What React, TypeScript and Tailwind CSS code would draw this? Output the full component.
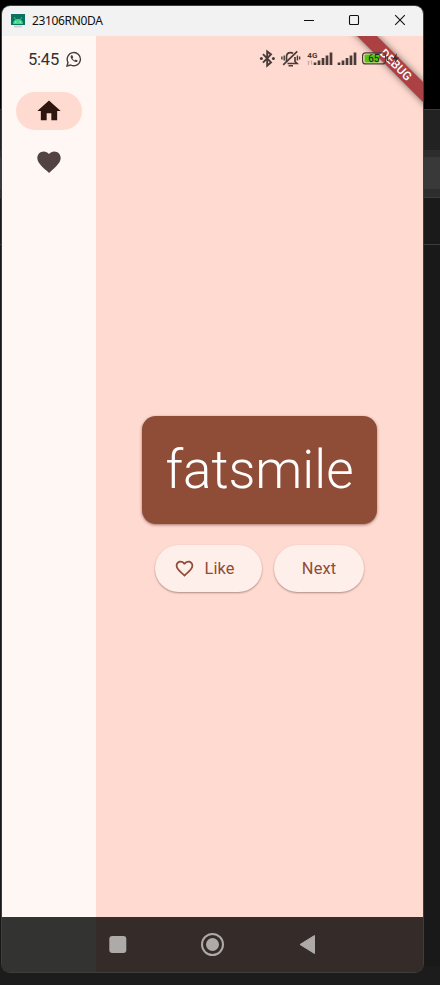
import React from "react";

const HEART =
  "M12 21.35l-1.45-1.32C5.4 15.36 2 12.28 2 8.5 2 5.42 4.42 3 7.5 3c1.74 0 3.41.81 4.5 2.09C13.09 3.81 14.76 3 16.5 3 19.58 3 22 5.42 22 8.5c0 3.78-3.4 6.86-8.55 11.54L12 21.35z";
const HEART_OUTLINE =
  "M16.5 3c-1.74 0-3.41.81-4.5 2.09C10.91 3.81 9.24 3 7.5 3 4.42 3 2 5.42 2 8.5c0 3.78 3.4 6.86 8.55 11.54L12 21.35l1.45-1.32C18.6 15.36 22 12.28 22 8.5 22 5.42 19.58 3 16.5 3zm-4.4 15.55l-.1.1-.1-.1C7.14 14.24 4 11.39 4 8.5 4 6.5 5.5 5 7.5 5c1.54 0 3.04.99 3.57 2.36h1.87C13.46 5.99 14.96 5 16.5 5c2 0 3.5 1.5 3.5 3.5 0 2.89-3.14 5.74-7.9 10.05z";

function Backdrop() {
  return (
    <div className="absolute inset-0 flex flex-col">
      <div className="h-[109px] bg-black" />
      <div className="h-[41px] border-t border-[#393939] bg-[#222222]" />
      <div className="h-[7px] bg-[#2d2d2d]" />
      <div className="h-8 bg-[#393939]" />
      <div className="h-2 bg-[#2d2d2d]" />
      <div className="h-[47px] border-t border-[#3c3c3c] bg-[#1a1a1a]" />
      <div className="h-[722px] border-t border-[#3c3c3c] bg-[#191919]" />
      <div className="flex-1 bg-[#1c1c1c]" />
    </div>
  );
}

function TitleBar() {
  return (
    <div className="flex h-[30px] shrink-0 items-center bg-[#f2f2f2] pl-[9px]">
      <svg width="14" height="15" viewBox="0 0 14 15">
        <rect width="14" height="11" fill="#0b7263" />
        <path d="M2 10a5 5 0 0 1 10 0z" fill="#3ddc84" />
        <path d="M3.200 3.200l1.400 2.400M10.800 3.200L9.400 5.600" stroke="#3ddc84" strokeWidth=".8" />
        <circle cx="4.800" cy="8" r=".6" fill="#fff" />
        <circle cx="9.200" cy="8" r=".6" fill="#fff" />
        <path d="M3 11.500h8v2H3z" fill="#cfcfcf" />
      </svg>
      <span className="ml-[7px] flex-1 font-['Noto_Sans',sans-serif] text-[12px] leading-4 tracking-[-0.35px] text-[#111]">
        23106RN0DA
      </span>
      <svg width="120" height="30" viewBox="303 6 120 30" fill="none" stroke="#111" strokeWidth="1.1">
        <path d="M304 20.5h10" />
        <rect x="349.500" y="15.500" width="9" height="9" rx="1" />
        <path d="M395.200 15.200l9.600 9.600M404.800 15.200l-9.600 9.600" />
      </svg>
    </div>
  );
}

function StatusIcons() {
  return (
    <svg width="145" height="24" viewBox="256 47 145 24" fill="none" stroke="#4a3b38">
      <path d="M263 54.2l8 8.2-3.8 3.200V51.400l3.800 3-8 8.200" strokeWidth="1.900" />
      <circle cx="261.400" cy="58.400" r="1.500" fill="#4a3b38" stroke="none" />
      <circle cx="273.400" cy="58.400" r="1.500" fill="#4a3b38" stroke="none" />
      <path d="M286.500 61.500V57c0-2.800 1.800-4.300 4.200-4.300.9 0 1.700.2 2.400.6M295 57v4.500l2 2H287.500" strokeWidth="1.700" />
      <path d="M283.200 64.800L297.300 51.400" strokeWidth="1.700" />
      <path d="M288.500 65.800h4.500" strokeWidth="1.600" />
      <path d="M284.200 55.500v5M281.900 56.500v3M297.400 55.500v5M299.600 56.500v3" strokeWidth="1.400" />
      <text x="307.300" y="57.500" fontSize="8" fontWeight="700" fill="#4a3b38" stroke="none" fontFamily="Roboto, sans-serif">4G</text>
      <path d="M307.500 61.500h2M308.500 65v-4M311.500 60.500v4" stroke="#c4a8a1" strokeWidth="1.200" />
      <path d="M315 65v-2.500M319 65v-4.500M323 65v-7M327 65v-9.500M331 65V52.500" strokeWidth="2.700" />
      <path d="M339 65v-2.500M343 65v-4.500M347 65v-7M351 65v-9.500M355 65V52.500" strokeWidth="2.700" />
    </svg>
  );
}

function Battery() {
  return (
    <svg className="absolute left-[358px] top-[11px]" width="42" height="24" viewBox="360 47 42 24">
      <rect x="362.600" y="52.900" width="23" height="11" rx="3" fill="none" stroke="#4a3b38" strokeWidth="1.200" />
      <rect x="364.500" y="54.500" width="14.500" height="8" rx="1" fill="#56c40c" />
      <text x="373.800" y="62.200" textAnchor="middle" fontSize="10" fill="#222" fontFamily="Roboto, sans-serif">65</text>
      <path d="M387.500 56v5" stroke="#4a3b38" strokeWidth="1.400" />
      <path d="M397 53l-4.500 6.200h3L394 64l5-6.500h-3z" fill="#3a2a28" />
    </svg>
  );
}

function Rail() {
  return (
    <div className="flex w-[94px] shrink-0 flex-col items-center bg-[#fff7f4]">
      <div className="flex h-[46px] w-full items-center pl-[26px]">
        <span className="w-[31px] pt-[2px] text-[16.500px] leading-none tracking-[-0.2px] text-[#353130]">
          5:45
        </span>
        <svg className="ml-[7px]" width="16" height="16" viewBox="0 0 16 16" fill="none" stroke="#454140">
          <path d="M1 15l1-3.700A6.600 6.600 0 1 1 4.700 14z" strokeWidth="1.400" />
          <path d="M5.200 4.200c-1.200 1-.6 3 1.200 4.900s4 2.600 5 1.400l.2-1-1.900-1-1 1C7.500 9 6.900 8.300 6.500 7.300l.8-1L6.300 4.200z" fill="#454140" stroke="none" />
        </svg>
      </div>
      <div className="mt-[10px] flex h-[38px] w-[66px] items-center justify-center rounded-full bg-[#ffdad0]">
        <svg width="28" height="28" viewBox="0 0 24 24" fill="#2e150d">
          <path d="M10 20v-6h4v6h5v-8h3L12 3 2 12h3v8z" />
        </svg>
      </div>
      <svg className="mt-[18px]" width="28" height="28" viewBox="0 0 24 24" fill="#534340">
        <path d={HEART} />
      </svg>
    </div>
  );
}

function Main() {
  const button =
    "flex h-[47px] items-center rounded-full bg-[#ffefeb] text-[16.4px] font-normal tracking-[0.1px] text-[#8f4c36] shadow-[0_1px_2px_rgba(60,20,10,0.4)]";
  return (
    <div className="flex flex-1 flex-col items-center bg-[#ffdad0]">
      <div className="flex h-[46px] w-full items-center pl-[160px]">
        <StatusIcons />
      </div>
      <div className="mt-[334px] flex h-[108px] w-[235px] items-center justify-center rounded-[14px] bg-[#8f4c36] shadow-[0_1px_3px_rgba(60,20,10,0.5)]">
        <span className="text-[53px] font-light leading-none text-white">fatsmile</span>
      </div>
      <div className="mt-[21px] flex gap-3">
        <div className={button + " w-[107px] pl-[18.5px]"}>
          <svg className="mr-[10px]" width="21" height="21" viewBox="0 0 24 24" fill="#8f4c36">
            <path d={HEART_OUTLINE} />
          </svg>
          <span className="pt-px">Like</span>
        </div>
        <div className={button + " w-[90px] justify-center"}>
          <span className="pt-px">Next</span>
        </div>
      </div>
    </div>
  );
}

function NavBar() {
  return (
    <div className="flex h-[55px] shrink-0 bg-[#352c2a]">
      <div className="w-[94px] bg-[#333331]" />
      <svg width="327" height="55" viewBox="96 917 327 55" fill="#aeaaa8">
        <rect x="109.300" y="936" width="17" height="17" rx="3" />
        <circle cx="212.500" cy="944.500" r="10.500" fill="none" stroke="#aeaaa8" strokeWidth="2" />
        <circle cx="212.500" cy="944.500" r="6.500" />
        <path d="M300 944.500L314.500 935.500V953.500z" stroke="#aeaaa8" strokeLinejoin="round" />
      </svg>
    </div>
  );
}

export default function App() {
  return (
    <div className="relative h-[985px] w-[440px] overflow-hidden pl-[2px] pt-[6px] font-[Roboto,sans-serif]">
      <Backdrop />
      <div className="relative flex h-[966px] w-[421px] flex-col overflow-hidden rounded-lg shadow-[0_0_0_1px_#3f3d3c]">
        <TitleBar />
        <div className="relative flex flex-1 overflow-hidden">
          <Rail />
          <Main />
          <div className="absolute left-[333.5px] top-[21.5px] flex h-[14px] w-[120px] rotate-45 items-center justify-center bg-[#ac4144] text-[12px] font-medium leading-none tracking-[0.2px] text-white shadow-[0_0_7px_rgba(0,0,0,0.55)]">
            DEBUG
          </div>
          <Battery />
        </div>
        <NavBar />
      </div>
    </div>
  );
}
